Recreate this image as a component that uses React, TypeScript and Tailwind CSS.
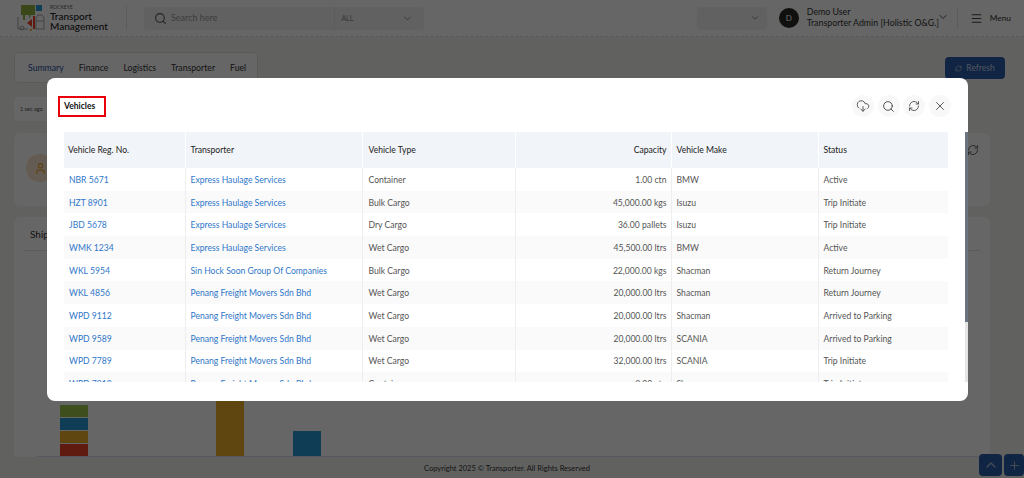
import React from "react";
import {
  ChevronDown,
  ChevronUp,
  CloudDownload,
  Menu,
  Plus,
  RefreshCw,
  Search,
  User,
  X,
} from "lucide-react";

const vehicles = [
  ["NBR 5671", "Express Haulage Services", "Container", "1.00 ctn", "BMW", "Active"],
  ["HZT 8901", "Express Haulage Services", "Bulk Cargo", "45,000.00 kgs", "Isuzu", "Trip Initiate"],
  ["JBD 5678", "Express Haulage Services", "Dry Cargo", "36.00 pallets", "Isuzu", "Trip Initiate"],
  ["WMK 1234", "Express Haulage Services", "Wet Cargo", "45,500.00 ltrs", "BMW", "Active"],
  ["WKL 5954", "Sin Hock Soon Group Of Companies", "Bulk Cargo", "22,000.00 kgs", "Shacman", "Return Journey"],
  ["WKL 4856", "Penang Freight Movers Sdn Bhd", "Wet Cargo", "20,000.00 ltrs", "Shacman", "Return Journey"],
  ["WPD 9112", "Penang Freight Movers Sdn Bhd", "Wet Cargo", "20,000.00 ltrs", "Shacman", "Arrived to Parking"],
  ["WPD 9589", "Penang Freight Movers Sdn Bhd", "Wet Cargo", "20,000.00 ltrs", "SCANIA", "Arrived to Parking"],
  ["WPD 7789", "Penang Freight Movers Sdn Bhd", "Wet Cargo", "32,000.00 ltrs", "SCANIA", "Trip Initiate"],
  ["WPD 7810", "Penang Freight Movers Sdn Bhd", "Container", "3.00 ctn", "Shacman", "Trip Initiate"],
];

const Logo = () => (
  <svg width="28" height="28" viewBox="0 0 28 28" fill="none" className="shrink-0">
    <path d="M4 1h14v10h-4l-2 4v-4H8v5H6v-5H4z" fill="#8fb13f" />
    <rect x="19" y="1" width="6" height="6" fill="#2799d8" />
    <path d="M16 12v13h2V12zM15 15l-5 4 5 4z" fill="#ed4528" />
    <path d="M19 25V14l2-3h4l2 3v11z" stroke="#a5a5a5" />
    <path d="M19 17h8" stroke="#a5a5a5" />
    <path d="M1 13v12h10" stroke="#a5a5a5" />
    <circle cx="5" cy="24" r="2" stroke="#a5a5a5" />
    <rect x="13" y="25" width="2" height="2" fill="#edb02a" />
  </svg>
);

const Tab = ({ label, active }: { label: string; active?: boolean }) => (
  <span className={active ? "text-[#1f4f9c]" : "text-[#333]"}>{label}</span>
);

const IconButton = ({ children }: { children: React.ReactNode }) => (
  <button className="flex h-[22px] w-[22px] items-center justify-center rounded-full bg-[#f8f8f8] text-[#444]">
    {children}
  </button>
);

const App = () => {
  return (
    <div className="relative h-[478px] w-[1024px] overflow-hidden bg-[#f3f3f1] font-[Lato,sans-serif] text-[#333]">
      {/* page behind the dialog */}
      <header className="flex h-[37px] items-center border-b border-dashed border-[#ddd] bg-white pl-[17px] pr-[13px]">
        <Logo />
        <div className="ml-[5px] w-[76px] shrink-0 leading-none">
          <div className="text-[5px] text-[#666]">ROCKEYE</div>
          <div className="mt-[1px] w-[70px] text-[10px] font-medium leading-[10.5px] text-[#222]">
            Transport Management
          </div>
        </div>
        <div className="mr-[17px] h-[24px] w-px bg-[#e5e5e5]" />
        <div className="flex h-[23px] w-[283px] items-center rounded bg-[#f3f3f3] pl-[10px]">
          <Search size={13} className="text-[#555]" />
          <span className="ml-[4px] flex-1 text-[9px] text-[#999]">Search here</span>
          <div className="flex h-full w-[90px] items-center justify-between border-l border-[#e3e3e3] pl-[6px] pr-[11px] text-[7px] text-[#888]">
            ALL
            <ChevronDown size={11} />
          </div>
        </div>
        <div className="ml-[273px] flex h-[23px] w-[70px] items-center justify-end rounded bg-[#f3f3f3] pr-[7px]">
          <ChevronDown size={10} className="text-[#777]" />
        </div>
        <div className="ml-[12px] flex h-[20px] w-[20px] shrink-0 items-center justify-center rounded-full bg-[#2a2826] text-[8px] text-white">
          D
        </div>
        <div className="mb-[3px] ml-[8px] w-[125px] shrink-0 whitespace-nowrap text-[8.8px] leading-[11px] text-[#333]">
          <div>Demo User</div>
          <div>Transporter Admin [Holistic O&amp;G.]</div>
        </div>
        <ChevronDown size={12} className="mb-[3px] ml-[5px] shrink-0 text-[#555]" />
        <div className="ml-[8px] h-[22px] w-px shrink-0 bg-[#e5e5e5]" />
        <Menu size={13} className="ml-[12px] shrink-0 text-[#444]" />
        <span className="ml-[7px] text-[8.3px] text-[#333]">Menu</span>
      </header>

      <div className="flex flex-col pl-[14px] pr-[34px] pt-[15px]">
        <div className="flex items-start justify-between">
          <div className="flex h-[31px] w-[244px] items-center gap-[15px] rounded border border-[#e2e2e2] bg-white pl-[13px] text-[8.7px]">
            <Tab label="Summary" active />
            <Tab label="Finance" />
            <Tab label="Logistics" />
            <Tab label="Transporter" />
            <Tab label="Fuel" />
          </div>
          <button className="-mr-[15px] mt-[5px] flex h-[22px] w-[60px] items-center justify-center gap-[4px] rounded-sm bg-[#2a5ba8] text-[8.5px] text-[#c9d6ea]">
            <RefreshCw size={7} />
            Refresh
          </button>
        </div>

        <div className="mt-[14px] flex h-[24px] w-[40px] items-center rounded-sm bg-white pl-[6px] pt-[1px] text-[5.5px] text-[#555]">
          1 sec ago
        </div>

        <div className="mt-[12px] flex h-[73px] items-start justify-between rounded-md bg-white pl-[12px] pr-[11px] pt-[11px]">
          <div className="flex h-[28px] w-[28px] translate-y-[10px] items-center justify-center rounded-full bg-[#fbe6cf]">
            <User size={13} className="text-[#e8a32a]" />
          </div>
          <RefreshCw size={12} className="text-[#666]" />
        </div>

        <div className="mt-[11px] flex h-[240px] flex-col rounded-t-md bg-white">
          <div className="mx-[10px] flex h-[34px] items-end border-b border-[#e3e3e3] pb-[8px] pl-[6px] text-[10px] text-[#333]">
            Shipments
          </div>
          <div className="ml-[22px] mt-auto flex h-[189px] items-end border-b border-[#dcdcf0]">
            <div className="ml-[24px] flex w-[28px] flex-col gap-px">
              <div className="h-[12px] bg-[#9bc34a]" />
              <div className="h-[12px] bg-[#2799d8]" />
              <div className="h-[12px] bg-[#edb02a]" />
              <div className="h-[12px] bg-[#ed4528]" />
            </div>
            <div className="ml-[128px] h-[100px] w-[28px] bg-[#edb02a]" />
            <div className="ml-[49px] h-[25px] w-[28px] bg-[#2799d8]" />
          </div>
        </div>
      </div>

      <footer className="mt-[6px] pr-[10px] text-center text-[7.5px] text-[#333]">
        Copyright 2025 © Transporter. All Rights Reserved
      </footer>

      <div className="absolute bottom-[2px] right-0 flex gap-[2px]">
        <button className="flex h-[22px] w-[23px] items-center justify-center rounded-sm bg-[#2a5ba8] text-[#aab9d0]">
          <ChevronUp size={16} />
        </button>
        <button className="flex h-[22px] w-[20px] items-center justify-center rounded-sm bg-[#2a5ba8] text-[#aab9d0]">
          <Plus size={13} />
        </button>
      </div>

      {/* dialog */}
      <div className="absolute inset-0 bg-black/60" />
      <div className="absolute left-[47px] top-[78px] flex h-[323px] w-[921px] flex-col rounded-lg bg-white">
        <div className="flex h-[54px] items-center justify-between pl-[11px] pr-[17px]">
          <div className="mt-[3px] flex h-[21px] w-[48px] items-center border-2 border-[#e8000b] pl-[4px] text-[8.5px] font-bold text-[#111]">
            Vehicles
          </div>
          <div className="mt-[2px] flex gap-[3.7px]">
            <IconButton>
              <CloudDownload size={14} strokeWidth={1.5} />
            </IconButton>
            <IconButton>
              <Search size={13} strokeWidth={1.7} />
            </IconButton>
            <IconButton>
              <RefreshCw size={12} strokeWidth={1.7} />
            </IconButton>
            <IconButton>
              <X size={14} strokeWidth={1.5} />
            </IconButton>
          </div>
        </div>

        <div className="flex h-[250px] pl-[17px]">
          <div className="w-[884px] overflow-hidden">
            <table className="w-[884px] table-fixed border-collapse text-[8.6px]">
              <colgroup>
                <col className="w-[121px]" />
                <col className="w-[177px]" />
                <col className="w-[153px]" />
                <col className="w-[156px]" />
                <col className="w-[147px]" />
                <col className="w-[130px]" />
              </colgroup>
              <thead>
                <tr className="h-[36px] bg-[#f1f4f8] text-left text-[#222]">
                  <th className="border-r border-[#fff] pl-[4px] font-normal">Vehicle Reg. No.</th>
                  <th className="border-r border-[#fff] pl-[5px] font-normal">Transporter</th>
                  <th className="border-r border-[#fff] pl-[6px] font-normal">Vehicle Type</th>
                  <th className="border-r border-[#fff] pr-[4px] text-right font-normal">Capacity</th>
                  <th className="border-r border-[#fff] pl-[5px] font-normal">Vehicle Make</th>
                  <th className="pl-[5px] font-normal">Status</th>
                </tr>
              </thead>
              <tbody>
                {vehicles.map((row, i) => (
                  <tr key={row[0]} className={`h-[22.7px] ${i % 2 === 1 ? "bg-[#fafafa]" : "bg-white"}`}>
                    <td className="border-r border-[#eee] pl-[5px] pt-[2px] text-[#2f77c9]">{row[0]}</td>
                    <td className="border-r border-[#eee] pl-[5px] pt-[2px] text-[#2f77c9]">{row[1]}</td>
                    <td className="border-r border-[#eee] pl-[6px] pt-[2px] text-[#555]">{row[2]}</td>
                    <td className="border-r border-[#eee] pr-[4px] pt-[2px] text-right text-[#555]">{row[3]}</td>
                    <td className="border-r border-[#eee] pl-[5px] pt-[2px] text-[#555]">{row[4]}</td>
                    <td className="pl-[5px] pt-[2px] text-[#555]">{row[5]}</td>
                  </tr>
                ))}
              </tbody>
            </table>
          </div>
          <div className="ml-[17px] h-full w-[3px] bg-[#e4e4e4]">
            <div className="h-[190px] w-full bg-[#6b7280]" />
          </div>
        </div>
      </div>
    </div>
  );
};

export default App;
